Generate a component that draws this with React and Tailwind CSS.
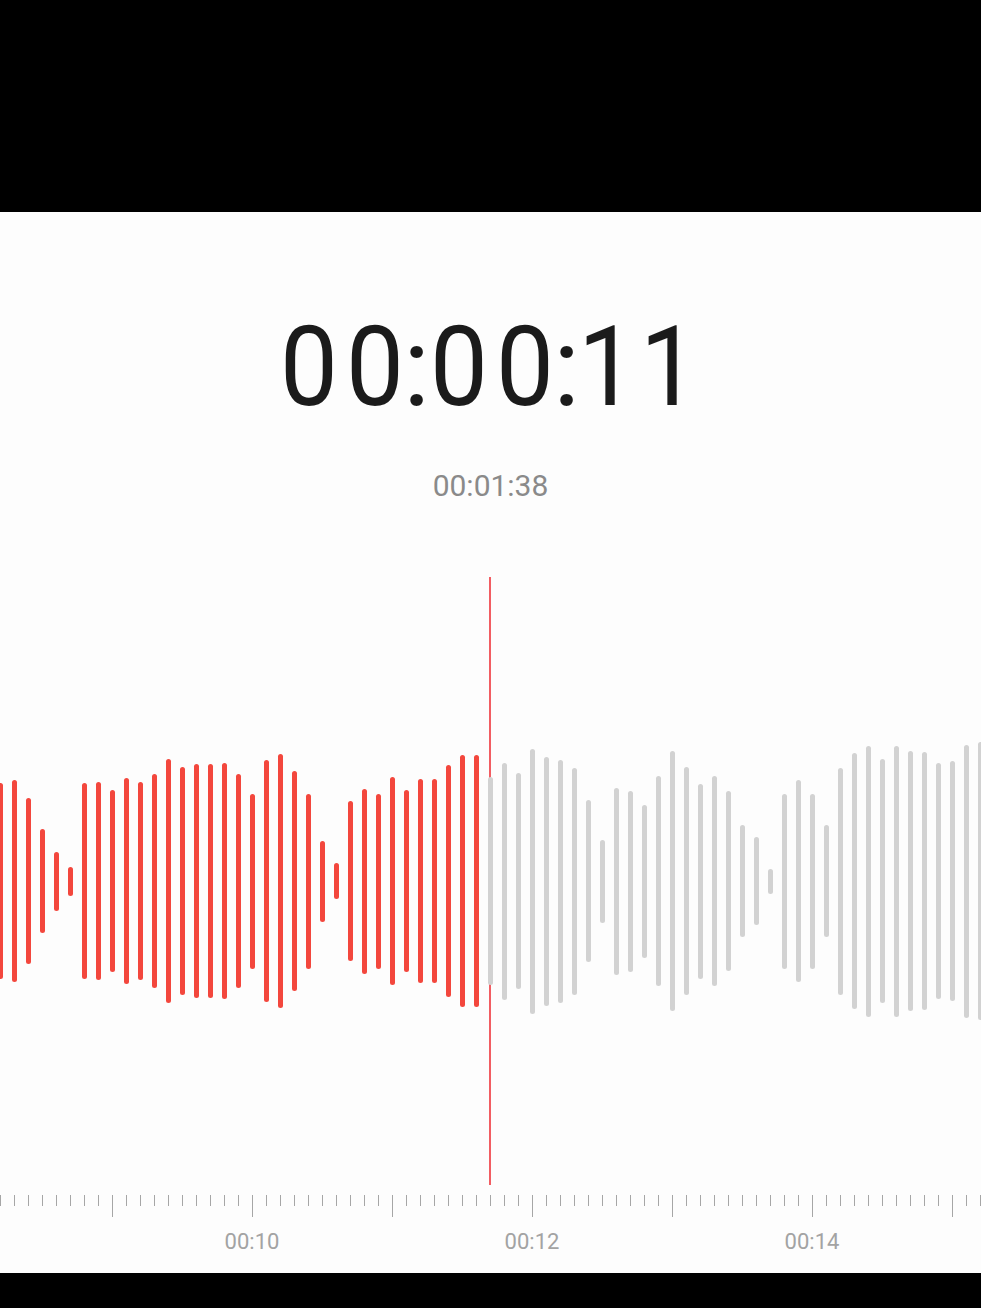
import React from "react";

// full bar heights in px, one bar every 14px starting at x=0
const bars = [
  196, 202, 166, 104, 59, 29, 196, 198, 182, 206, 198, 214, 244, 228, 234, 234,
  236, 214, 175, 242, 254, 220, 175, 81, 36, 160, 185, 175, 208, 182, 204, 204,
  232, 252, 252, 208, 237, 216, 265, 249, 243, 227, 162, 83, 187, 181, 153, 210,
  260, 228, 195, 210, 180, 112, 88, 25, 175, 202, 175, 112, 227, 256, 271, 244,
  271, 260, 258, 236, 240, 273, 278,
];

const PLAYED = 35; // bars before the playhead

const timer = [
  { ch: "0", w: "w-[66px] scale-x-[0.92]" },
  { ch: "0", w: "w-[66px] scale-x-[0.92]" },
  { ch: ":", w: "w-[18px]" },
  { ch: "0", w: "w-[66px] scale-x-[0.92]" },
  { ch: "0", w: "w-[66px] scale-x-[0.92]" },
  { ch: ":", w: "w-[18px]" },
  { ch: "1", w: "w-[62px] scale-x-[0.92]" },
  { ch: "1", w: "w-[62px] scale-x-[0.92]" },
];

const labels = ["00:10", "00:12", "00:14"];

function Waveform() {
  return (
    <div className="relative mt-[76px] h-[608px] w-full overflow-hidden">
      {/* playhead */}
      <div className="absolute left-[489px] top-0 bottom-0 w-[2px] bg-[#f25d62]" />
      <div className="relative flex h-full items-center gap-[9px] ml-[-2px]">
        {bars.map((h, i) => (
          <div
            key={i}
            className={
              "w-[5px] shrink-0 rounded-full " +
              (i < PLAYED ? "bg-[#f3473d]" : "bg-[#d2d2d2]")
            }
            style={{ height: h }}
          />
        ))}
      </div>
    </div>
  );
}

function Ruler() {
  const ticks = Array.from({ length: 71 }, (_, i) => i);
  return (
    <div className="mt-[10px] w-full overflow-hidden">
      <div className="flex items-start gap-[13px]">
        {ticks.map((i) => (
          <div
            key={i}
            className={
              "w-px shrink-0 bg-[#a6a6a6] " +
              (i % 10 === 8 ? "h-[22px]" : "h-[11px]")
            }
          />
        ))}
      </div>
      <div className="mt-[14px] flex ml-[112px]">
        {labels.map((t) => (
          <div
            key={t}
            className="w-[280px] shrink-0 text-center text-[22px] leading-none text-[#a3a3a3]"
          >
            {t}
          </div>
        ))}
      </div>
    </div>
  );
}

export default function App() {
  return (
    <div
      className="flex h-[1308px] w-full flex-col bg-black"
      style={{ fontFamily: "Roboto, 'Noto Sans', sans-serif" }}
    >
      <div className="h-[212px] shrink-0 bg-black" />

      <div className="flex flex-1 flex-col items-center overflow-hidden bg-[#fdfdfd]">
        <div className="mt-[99px] flex h-[112px] ml-[-6px] text-[112px] leading-none text-[#1b1b1b]">
          {timer.map((c, i) => (
            <span key={i} className={"flex shrink-0 justify-center " + c.w}>
              {c.ch}
            </span>
          ))}
        </div>

        <div className="mt-[48px] text-[30px] leading-none text-[#8a8a8a]">
          00:01:38
        </div>

        <Waveform />
        <Ruler />
      </div>

      <div className="h-[35px] shrink-0 bg-black" />
    </div>
  );
}
